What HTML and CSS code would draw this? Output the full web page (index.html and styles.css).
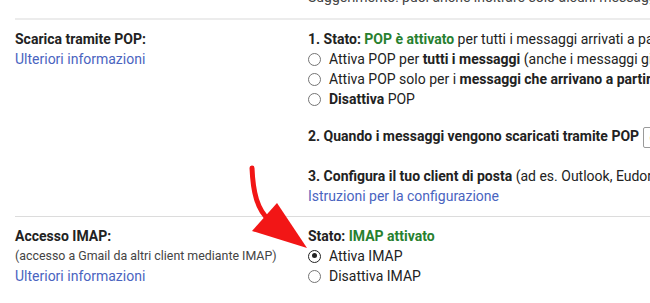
FILE: index.html
```html
<!DOCTYPE html>
<html lang="it">
<head>
    <meta charset="UTF-8">
    <meta name="viewport" content="width=device-width, initial-scale=1.0">
    <title>Impostazioni - Inoltro e POP/IMAP</title>
    <link rel="stylesheet" href="styles.css">
</head>
<body>

    <div class="settings">
        <div class="row row-tip">
            <div class="label"></div>
            <div class="value">Suggerimento: puoi anche inoltrare solo alcuni messaggi creando un filtro.</div>
        </div>

        <div class="row row-pop">
            <div class="label">
                <div class="label-title">Scarica tramite POP:</div>
                <a class="link" href="#">Ulteriori informazioni</a>
            </div>
            <div class="value">
                <div class="line"><b>1. Stato: <span class="ok">POP è attivato</span></b> per tutti i messaggi arrivati a partire dalle ore 10:00</div>
                <label class="radio"><span class="dot"></span>Attiva POP per <b>tutti i messaggi</b> (anche i messaggi già scaricati)</label>
                <label class="radio"><span class="dot"></span>Attiva POP solo per i <b>messaggi che arrivano a partire da adesso</b></label>
                <label class="radio"><span class="dot"></span><b>Disattiva</b> POP</label>

                <div class="line step-2"><b>2. Quando i messaggi vengono scaricati tramite POP</b> <span class="select">conserva la copia di Gmail in Posta in arrivo</span></div>

                <div class="line step-3"><b>3. Configura il tuo client di posta</b> (ad es. Outlook, Eudora, Netscape Mail)</div>
                <a class="link line" href="#">Istruzioni per la configurazione</a>
            </div>
        </div>

        <div class="row row-imap">
            <div class="label">
                <div class="label-title">Accesso IMAP:</div>
                <div class="label-note">(accesso a Gmail da altri client mediante IMAP)</div>
                <a class="link" href="#">Ulteriori informazioni</a>
            </div>
            <div class="value">
                <div class="line"><b>Stato: <span class="ok">IMAP attivato</span></b></div>
                <label class="radio"><span class="dot checked"></span>Attiva IMAP</label>
                <label class="radio"><span class="dot"></span>Disattiva IMAP</label>
            </div>
        </div>
    </div>

    <!-- freccia rossa sopra il contenuto -->
    <svg class="arrow" width="650" height="303" viewBox="0 0 650 303" xmlns="http://www.w3.org/2000/svg">
        <path d="M252 168 C253 192 257 210 270 221" fill="none" stroke="#f21616" stroke-width="5" stroke-linecap="round"/>
        <path d="M252 231 L277 203 L307 248 Z" fill="#f21616"/>
    </svg>

</body>
</html>
```

FILE: styles.css
```css
:root {
    --text: #222222;
    --muted: #444444;
    --link: #4a64bf;
    --green: #28802f;
    --line: #dcdcdc;
}
* { box-sizing: border-box; }
html, body { margin: 0; padding: 0; }
body { font-family: Roboto, Arial, sans-serif; font-size: 14px; line-height: 20px; color: var(--text); background: #fff; overflow: hidden; width: 650px; height: 303px; position: relative; }
.settings { padding-left: 15px; }
.row { display: grid; grid-template-columns: 293px auto; white-space: nowrap; }
.row-tip { margin-top: -13px; padding-bottom: 11px; color: var(--muted); }
.row-pop { border-top: 2px solid #ececec; padding: 9px 0 10px; }
.row-imap { border-top: 1px solid var(--line); padding-top: 9px; }
.label-title { font-weight: 700; }
.label-note { font-size: 12.4px; color: var(--muted); }
.link { display: block; color: var(--link); text-decoration: none; }
.line { display: block; }
.ok { color: var(--green); }
b { font-weight: 700; }
.radio { display: block; }
.dot { display: inline-block; vertical-align: -2px; width: 13px; height: 13px; margin-right: 8px; border: 1.5px solid #757575; border-radius: 50%; position: relative; }
.dot.checked { border-color: #222; }
.dot.checked::after { content: ""; position: absolute; top: 2.5px; left: 2.5px; width: 5px; height: 5px; border-radius: 50%; background: #222; }
.step-2 { margin-top: 17px; }
.select { display: inline-block; vertical-align: middle; height: 21px; line-height: 19px; padding: 0 6px; border: 1px solid #9a9a9a; border-radius: 2px; font-weight: 400; }
.step-3 { margin-top: 18px; }
.arrow { position: absolute; top: 0; left: 0; pointer-events: none; }
```
